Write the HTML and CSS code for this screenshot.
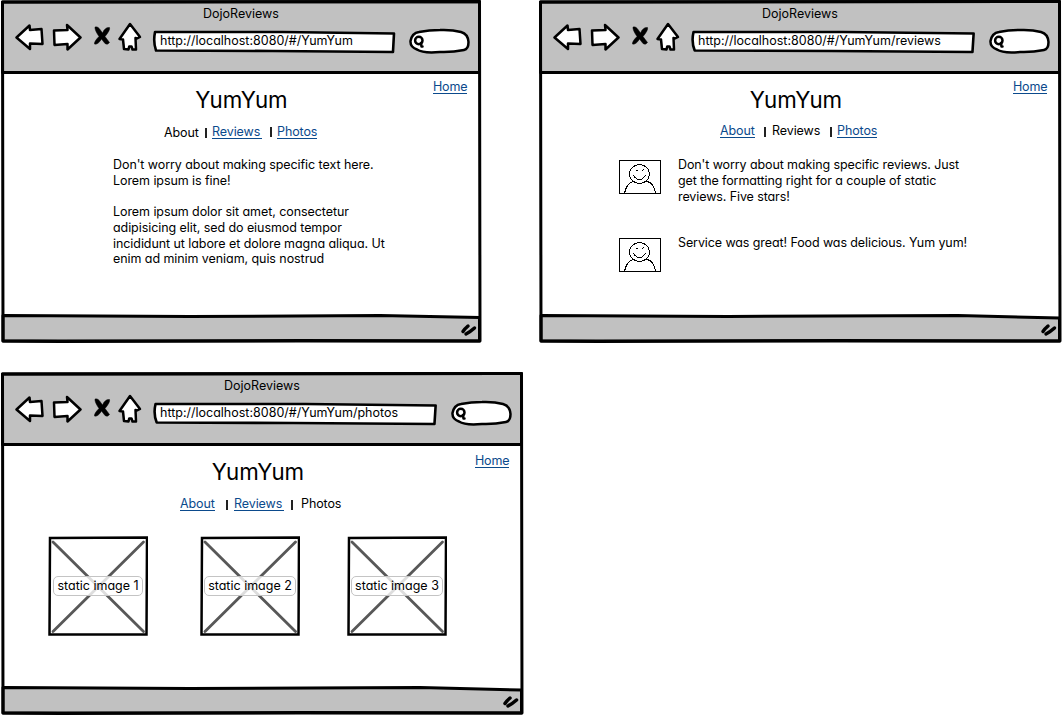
FILE: index.html
```html
<!DOCTYPE html>
<html lang="en">
<head>
<meta charset="utf-8">
<title>DojoReviews</title>
<link rel="stylesheet" href="styles.css">
</head>
<body>
<svg class="defs" width="0" height="0">
  <symbol id="back" viewBox="0 0 30 30"><path d="M1.500 15.500 14.500 3.500 15 8 26.500 7 27.500 22 15 21.500 15 27Z"/></symbol>
  <symbol id="forward" viewBox="0 0 30 30"><path d="M2 8.500 15.500 8 15 3 28.500 15.500 15.500 27.500 15.500 22 2.500 23Z"/></symbol>
  <symbol id="stop" viewBox="0 0 18 22"><path d="M2 2 Q5 1 7 4.500 L9.500 8 Q12 2 16.500 2.500 Q17.500 5 12 11.500 L16.500 17.500 Q14.500 20.500 12 18.500 L8.500 14 Q5 20 1.500 19 Q1 16.500 6 11.500 Q1.500 5 2 2Z"/></symbol>
  <symbol id="home" viewBox="0 0 26 30"><path d="M13 2 23 15 20 16.500 18.500 16 19 27.500 15.500 27.500 14.500 24.500 12.200 24.500 11.500 27.500 7 27 6 17.500 2.500 17Z"/></symbol>
  <symbol id="search" viewBox="0 0 62 28"><path class="pill" d="M31 2 Q43 1.500 52 4 Q59 6 59.500 14 Q59.500 21 55 22 Q43 24.500 31 24 Q14 25.500 8 21.500 Q1 19 1.500 13 Q3 5 10 4 Q20 2 31 2Z"/><circle class="lens" cx="9.800" cy="12.500" r="3.700"/><path class="lens" d="M12 15 12.500 18.500 13.500 18.500"/></symbol>
  <symbol id="grip" viewBox="0 0 18 16"><path d="M3 10.500Q5 7.500 8 5 M6 13Q10 11 14.500 7" /></symbol>
  <symbol id="face" viewBox="0 0 42 34"><path class="box" d="M.5 .5H41.500V33.500H.5Z"/><ellipse cx="20.500" cy="14" rx="10" ry="9.500"/><path d="M5.500 33.500Q7 24 14.500 21 M27.500 21Q36 24 36.500 33.500 M16.500 10.500 18.500 10.500 M23 10.500 25 9.500 M14.500 15.500Q20.500 24 26.500 15.500"/></symbol>
  <symbol id="cross" viewBox="0 0 100 100"><path class="x" d="M5 6 95.500 95.500M95.500 6 5 95.500"/><path class="edge" d="M2 2 99 1.500 98.500 98.500 1.500 98.500Z"/></symbol>
</svg>
<main class="board">
  <section class="window narrow">
    <svg class="frame" viewBox="0 0 482 343"><path class="bar" d="M2.500 2 479.500 1.500V72.500H2.500Z"/><path class="bar" d="M3 315.500 190 316.500 380 315.500 479.500 317.500V341L3 341Z"/><path d="M2.500 2 479.500 1.500 480 341 300 340.500 60 341.500 3 341Z"/></svg>
    <header class="chrome">
      <div class="caption">DojoReviews</div>
      <div class="tools">
        <svg class="ic back"><use href="#back"/></svg><svg class="ic forward"><use href="#forward"/></svg><svg class="ic stop"><use href="#stop"/></svg><svg class="ic home"><use href="#home"/></svg>
        <div class="url"><svg viewBox="0 0 243 24" preserveAspectRatio="none"><path d="M3 2 130 2 241 3.500 240 22 120 21 4 20.500Q1 12 3 2Z"/></svg><span>http://localhost:8080/#/YumYum</span></div>
        <svg class="ic search"><use href="#search"/></svg>
      </div>
    </header>
    <div class="content">
      <a class="homelink">Home</a>
      <h1>YumYum</h1>
      <nav class="about-nav"><span class="about">About</span><i></i><a class="reviews">Reviews</a><i></i><a class="photos">Photos</a></nav>
      <div class="copy">
        <p>Don't worry about making specific text here.<br>Lorem ipsum is fine!</p>
        <p>Lorem ipsum dolor sit amet, consectetur<br>adipisicing elit, sed do eiusmod tempor<br>incididunt ut labore et dolore magna aliqua. Ut<br>enim ad minim veniam, quis nostrud</p>
      </div>
    </div>
    <footer class="status"><svg class="grip"><use href="#grip"/></svg></footer>
  </section>

  <section class="window">
    <svg class="frame" viewBox="0 0 524 343"><path class="bar" d="M2.500 2 521.500 1.500V72.500H2.500Z"/><path class="bar" d="M3 315.500 190 316.500 420 315.500 521.500 318V341L3 341Z"/><path d="M2.500 2 521.500 1.500 522 341 300 340.500 60 341.500 3 341Z"/></svg>
    <header class="chrome">
      <div class="caption">DojoReviews</div>
      <div class="tools">
        <svg class="ic back"><use href="#back"/></svg><svg class="ic forward"><use href="#forward"/></svg><svg class="ic stop"><use href="#stop"/></svg><svg class="ic home"><use href="#home"/></svg>
        <div class="url"><svg viewBox="0 0 243 24" preserveAspectRatio="none"><path d="M3 2 130 2 241 3.500 240 22 120 21 4 20.500Q1 12 3 2Z"/></svg><span>http://localhost:8080/#/YumYum/reviews</span></div>
        <svg class="ic search"><use href="#search"/></svg>
      </div>
    </header>
    <div class="content reviews-page">
      <a class="homelink">Home</a>
      <h1>YumYum</h1>
      <nav class="reviews-nav"><a class="about">About</a><i></i><span class="reviews">Reviews</span><i></i><a class="photos">Photos</a></nav>
      <div class="review-list">
        <article><svg class="face"><use href="#face"/></svg><p>Don't worry about making specific reviews. Just<br>get the formatting right for a couple of static<br>reviews. Five stars!</p></article>
        <article><svg class="face"><use href="#face"/></svg><p>Service was great! Food was delicious. Yum yum!</p></article>
      </div>
    </div>
    <footer class="status"><svg class="grip"><use href="#grip"/></svg></footer>
  </section>

  <section class="window">
    <svg class="frame" viewBox="0 0 524 343"><path class="bar" d="M2.500 2 521.500 1.500V72.500H2.500Z"/><path class="bar" d="M3 315.500 190 316.500 420 315.500 521.500 318V341L3 341Z"/><path d="M2.500 2 521.500 1.500 522 341 300 340.500 60 341.500 3 341Z"/></svg>
    <header class="chrome">
      <div class="caption">DojoReviews</div>
      <div class="tools">
        <svg class="ic back"><use href="#back"/></svg><svg class="ic forward"><use href="#forward"/></svg><svg class="ic stop"><use href="#stop"/></svg><svg class="ic home"><use href="#home"/></svg>
        <div class="url"><svg viewBox="0 0 243 24" preserveAspectRatio="none"><path d="M3 2 130 2 241 3.500 240 22 120 21 4 20.500Q1 12 3 2Z"/></svg><span>http://localhost:8080/#/YumYum/photos</span></div>
        <svg class="ic search"><use href="#search"/></svg>
      </div>
    </header>
    <div class="content photos-page">
      <a class="homelink">Home</a>
      <h1>YumYum</h1>
      <nav class="photos-nav"><a class="about">About</a><i></i><a class="reviews">Reviews</a><i></i><span class="photos">Photos</span></nav>
      <div class="gallery">
        <figure><svg><use href="#cross"/></svg><figcaption>static image 1</figcaption></figure>
        <figure><svg><use href="#cross"/></svg><figcaption>static image 2</figcaption></figure>
        <figure><svg><use href="#cross"/></svg><figcaption>static image 3</figcaption></figure>
      </div>
    </div>
    <footer class="status"><svg class="grip"><use href="#grip"/></svg></footer>
  </section>
</main>
</body>
</html>
```
FILE: styles.css
```css
* { box-sizing: border-box; }
body {
  margin: 0;
  background: #fff;
  color: #000;
  font: 12.5px/16px Inter, "Liberation Sans", sans-serif;
  font-feature-settings: "cv11", "calt" 0;
  overflow: hidden;
}
h1, p, figure { margin: 0; }
.defs { position: absolute; }
.board {
  display: flex;
  flex-wrap: wrap;
  justify-content: space-between;
  gap: 29px 0;
  width: 1062px;
}
.window {
  display: flex;
  flex-direction: column;
  position: relative;
  width: 524px;
  height: 343px;
}
.window.narrow { width: 482px; }
.frame {
  position: absolute;
  inset: 0;
  width: 100%;
  height: 100%;
  z-index: -1;
  fill: none;
  stroke: #000;
  stroke-width: 3;
  stroke-linejoin: round;
}
.frame .bar { fill: #c1c1c1; }
.chrome { height: 74px; }
.caption { padding-top: 6px; text-align: center; }
.tools { display: flex; padding: 0 11px 0 15px; }
.ic {
  flex: none;
  fill: #fff;
  stroke: #000;
  stroke-width: 2.500;
  stroke-linejoin: round;
}
.back, .forward { width: 30px; height: 30px; }
.forward { margin-left: 7px; }
.stop { width: 18px; height: 22px; margin: 3px 0 0 11px; fill: #000; stroke-width: .5; }
.home { width: 26px; height: 30px; margin-left: 6px; }
.url {
  display: grid;
  flex: 1;
  height: 24px;
  margin: 8px 13px 0 9px;
}
.url svg {
  grid-area: 1 / 1;
  width: 100%;
  height: 24px;
  fill: #fff;
  stroke: #000;
  stroke-width: 2.600;
  stroke-linejoin: round;
}
.url path { vector-effect: non-scaling-stroke; }
.url span { grid-area: 1 / 1; z-index: 1; padding: 3px 0 0 8px; }
.search { width: 62px; height: 28px; margin-top: 6px; }
.lens { fill: none; stroke-width: 2.500; stroke-linecap: round; }
.content { flex: 1; display: flex; flex-direction: column; }
.homelink { align-self: flex-end; width: 34px; margin: 5px 15px 0 0; letter-spacing: -.2px; }
a {
  height: 15px;
  color: #0b4a8c;
  border-bottom: 1px solid #0b4a8c;
}
h1 {
  margin-top: -8px;
  padding-left: 1px;
  font-size: 22.300px;
  font-weight: 400;
  line-height: 28px;
  text-align: center;
}
.reviews-page h1, .photos-page h1 { padding: 0 8px 0 0; }
nav { display: flex; margin-top: 10px; white-space: nowrap; letter-spacing: -.1px; }
nav i { width: 2px; height: 10px; margin-top: 4px; background: #222; }
.about { width: 35px; }
.reviews { width: 50px; }
.photos { width: 40px; }
.about-nav { padding-left: 164px; }
.about-nav .about { margin-top: 1px; }
.about-nav .reviews { margin: 0 8px 0 5px; }
.about-nav i { margin-left: 6px; }
.about-nav i:nth-of-type(2) { margin: 3px 5px 0 0; }
.reviews-nav { padding-left: 182px; margin-top: 9px; }
.reviews-nav i { margin-left: 9px; }
.reviews-nav .reviews { margin-left: 6px; }
.reviews-nav i:nth-of-type(2) { margin: 4px 5px 0 8px; }
.photos-nav { padding-left: 180px; }
.photos-nav i { margin-left: 11px; }
.photos-nav .reviews { margin-left: 6px; }
.photos-nav i:nth-of-type(2) { margin: 4px 8px 0 7px; }
.copy { padding: 16px 0 0 113px; line-height: 15.700px; letter-spacing: -.07px; white-space: nowrap; }
.copy p + p { margin-top: 15.700px; }
.review-list { display: flex; flex-direction: column; padding: 21px 0 0 81px; gap: 44px; }
article { display: flex; gap: 17px; height: 34px; }
article p { margin-top: -3px; letter-spacing: -.1px; white-space: nowrap; }
.face { width: 42px; height: 34px; fill: none; stroke: #000; stroke-width: 1; shape-rendering: crispEdges; }
.photos-page .homelink { margin-top: 7px; margin-bottom: -2px; }
.gallery { display: flex; padding: 24px 0 0 48px; gap: 52px; }
.gallery figure:last-child { margin-left: -5px; }
figure { display: grid; place-items: center; width: 100px; height: 100px; }
figure svg { grid-area: 1 / 1; width: 100px; height: 100px; fill: none; }
.edge { stroke: #000; stroke-width: 2.500; }
.x { stroke: #585858; stroke-width: 2.800; stroke-linecap: round; }
figcaption {
  grid-area: 1 / 1;
  z-index: 1;
  height: 20px;
  padding: 1px 3px;
  border: 1px solid #c4c4c4;
  border-radius: 5px;
  background: rgba(255, 255, 255, .8);
  white-space: nowrap;
}
.status { display: flex; justify-content: flex-end; height: 22px; padding-right: 4px; }
.grip { width: 18px; height: 16px; fill: none; stroke: #000; stroke-width: 3.500; stroke-linecap: round; }
```
